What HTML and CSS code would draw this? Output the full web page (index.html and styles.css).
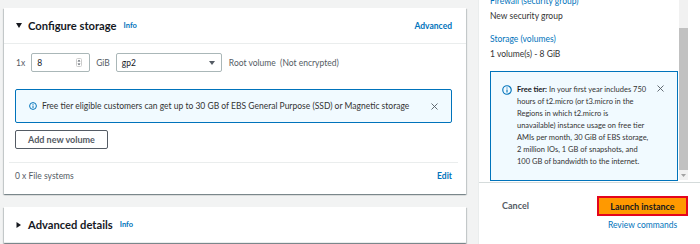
FILE: index.html
```html
<!DOCTYPE html>
<html lang="en">
<head>
    <meta charset="UTF-8">
    <meta name="viewport" content="width=device-width, initial-scale=1.0">
    <title>Launch an instance</title>
    <link rel="stylesheet" href="styles.css">
</head>
<body>
    <div class="layout">
        <main class="main">
            <section class="card">
                <div class="card-header">
                    <svg class="caret" width="6" height="5" viewBox="0 0 6 5"><path d="M0 0h6L3 5z" fill="#16191f"/></svg>
                    <h2>Configure storage</h2>
                    <a class="info">Info</a>
                    <a class="header-link">Advanced</a>
                </div>
                <div class="card-body">
                    <div class="volume-row">
                        <span class="muted">1x</span>
                        <div class="field field-number">
                            <span>8</span>
                            <svg width="6" height="9" viewBox="0 0 6 9"><rect x="0.5" y="0.5" width="5" height="8" rx="1" fill="none" stroke="#ccc"/><path d="M1.5 3.5h3L3 1.8zM1.5 5.5h3L3 7.2z" fill="#545b64"/></svg>
                        </div>
                        <span class="muted">GiB</span>
                        <div class="field field-select">
                            <span>gp2</span>
                            <svg width="6" height="4" viewBox="0 0 6 4"><path d="M0 0h6L3 4z" fill="#545b64"/></svg>
                        </div>
                        <span class="muted">Root volume&nbsp; (Not encrypted)</span>
                    </div>

                    <div class="alert">
                        <svg class="alert-icon" width="8" height="8" viewBox="0 0 16 16"><circle cx="8" cy="8" r="6.8" fill="none" stroke="#0073bb" stroke-width="2"/><path d="M8 7v5M8 3.8v1.8" stroke="#0073bb" stroke-width="2"/></svg>
                        <p>Free tier eligible customers can get up to 30 GB of EBS General Purpose (SSD) or Magnetic storage</p>
                        <svg class="close" width="7" height="7" viewBox="0 0 14 14"><path d="M1 1l12 12M13 1L1 13" stroke="#545b64" stroke-width="1.8"/></svg>
                    </div>

                    <button class="btn">Add new volume</button>

                    <div class="divider"></div>

                    <div class="fs-row">
                        <span class="muted">0 x File systems</span>
                        <a class="link-bold">Edit</a>
                    </div>
                </div>
            </section>

            <section class="card">
                <div class="card-header">
                    <svg class="caret" width="6" height="6" viewBox="0 0 6 6"><path d="M0.5 0v6L5 3z" fill="#16191f"/></svg>
                    <h2>Advanced details</h2>
                    <a class="info">Info</a>
                </div>
            </section>
        </main>

        <aside class="summary">
            <div class="summary-scroll">
                <div class="summary-content">
                    <div class="summary-item">
                        <a class="summary-label">Firewall (security group)</a>
                        <div class="summary-value">New security group</div>
                    </div>
                    <div class="summary-item">
                        <a class="summary-label">Storage (volumes)</a>
                        <div class="summary-value">1 volume(s) - 8 GiB</div>
                    </div>

                    <div class="tip">
                        <svg class="tip-icon" width="10" height="10" viewBox="0 0 16 16"><circle cx="8" cy="8" r="6.8" fill="none" stroke="#0073bb" stroke-width="1.8"/><path d="M8 7v5M8 3.8v1.8" stroke="#0073bb" stroke-width="1.8"/></svg>
                        <p><b>Free tier:</b> In your first year includes 750<br>
                        hours of t2.micro (or t3.micro in the<br>
                        Regions in which t2.micro is<br>
                        unavailable) instance usage on free tier<br>
                        AMIs per month, 30 GiB of EBS storage,<br>
                        2 million IOs, 1 GB of snapshots, and<br>
                        100 GB of bandwidth to the internet.</p>
                        <svg class="close" width="7" height="7" viewBox="0 0 14 14"><path d="M1 1l12 12M13 1L1 13" stroke="#545b64" stroke-width="1.8"/></svg>
                    </div>
                </div>
                <div class="scrollbar">
                    <div class="thumb"></div>
                    <svg class="scroll-arrow" width="5" height="3" viewBox="0 0 5 3"><path d="M0 0h5L2.5 3z" fill="#a3a3a3"/></svg>
                </div>
            </div>

            <div class="summary-footer">
                <a class="cancel">Cancel</a>
                <div class="launch">
                    <button class="btn-primary">Launch instance</button>
                    <a class="review">Review commands</a>
                </div>
            </div>
        </aside>
    </div>
</body>
</html>
```

FILE: styles.css
```css
:root {
    --text-color: #16191f;
    --muted-color: #545b64;
    --link-color: #0073bb;
    --line-color: #eaeded;
}

body {
    margin: 0;
    font-family: Lato, 'Liberation Sans', sans-serif;
    font-size: 8.5px;
    color: var(--text-color);
    overflow: hidden;
}

a {
    color: var(--link-color);
    text-decoration: none;
    cursor: pointer;
}

p {
    margin: 0;
}

.layout {
    display: flex;
    gap: 12px;
    height: 244px;
    background: #f2f3f3;
}

.main {
    width: 462px;
    padding: 8px 0 0 4px;
}

.card {
    background: #fff;
    margin-bottom: 13px;
    box-shadow: 0 1px 1px 0 rgba(0,28,36,0.3), 1px 1px 1px 0 rgba(0,28,36,0.15), -1px 1px 1px 0 rgba(0,28,36,0.15);
}

.card-header {
    display: flex;
    align-items: center;
    height: 35px;
    padding: 0 14px 0 12px;
    border-bottom: 1px solid var(--line-color);
}

.caret {
    margin-right: 6px;
}

.card-header h2 {
    margin: 0;
    font-size: 11.2px;
    font-weight: 700;
}

.info {
    margin-left: 7px;
    font-size: 7.5px;
    font-weight: 700;
}

.header-link {
    margin-left: auto;
    font-weight: 700;
}

.card-body {
    padding: 9px 14px 12px 11px;
}

.muted {
    color: var(--muted-color);
}

.volume-row {
    display: flex;
    align-items: center;
    height: 19px;
    gap: 6px;
    padding-left: 1px;
}

.field {
    display: flex;
    align-items: center;
    justify-content: space-between;
    box-sizing: border-box;
    height: 19px;
    padding: 0 6px 0 5px;
    border: 1px solid #aab7b8;
    border-radius: 2px;
}

.field-number {
    width: 59px;
    padding-right: 7px;
}

.field-select {
    width: 106px;
}

.volume-row .muted:last-child {
    margin-left: 1px;
}

.alert {
    display: flex;
    align-items: center;
    box-sizing: border-box;
    height: 34px;
    margin-top: 17px;
    padding: 0 13px;
    background: #f1faff;
    border: 1px solid var(--link-color);
    border-radius: 2px;
    color: #333;
}

.alert-icon {
    margin-right: 5px;
}

.alert p {
    flex: 1;
}

.btn {
    display: block;
    box-sizing: border-box;
    height: 19px;
    margin-top: 7px;
    padding: 0 12px;
    font-family: inherit;
    font-size: 9px;
    font-weight: 700;
    color: var(--muted-color);
    background: #fff;
    border: 1px solid var(--muted-color);
    border-radius: 2px;
}

.divider {
    height: 1px;
    margin: 13px -6px 0;
    background: var(--line-color);
}

.fs-row {
    display: flex;
    justify-content: space-between;
    margin-top: 7px;
    line-height: 12px;
}

.link-bold {
    font-weight: 700;
}

/* summary panel on the right */
.summary {
    display: flex;
    flex-direction: column;
    width: 221px;
    background: #fff;
    border-left: 1px solid var(--line-color);
}

.summary-scroll {
    display: flex;
    height: 182px;
    overflow: hidden;
    border-bottom: 1px solid #d5dbdb;
}

.summary-content {
    width: 188px;
    margin: -5px 0 0 11px;
}

.summary-item {
    margin-bottom: 11px;
    line-height: 12px;
}

.summary-label {
    display: block;
}

.summary-value {
    margin-top: 3px;
    color: #333;
}

.summary-item:last-of-type {
    margin-bottom: 10px;
}

.tip {
    display: flex;
    align-items: flex-start;
    box-sizing: border-box;
    padding: 12px 13px 12px 11px;
    background: #f1faff;
    border: 1px solid var(--link-color);
    color: #333;
    font-size: 7.5px;
    line-height: 12px;
}

.tip-icon {
    flex: none;
    margin: 1px 5px 0 0;
}

.tip p {
    flex: 1;
    white-space: nowrap;
}

.tip b {
    color: var(--text-color);
}

.tip .close {
    flex: none;
    margin-top: 1px;
}

.scrollbar {
    display: flex;
    flex-direction: column;
    align-items: center;
    width: 9px;
    height: 180px;
    margin: 0 12px 0 1px;
    background: #f1f1f1;
}

.thumb {
    width: 9px;
    height: 142px;
    margin-top: 28px;
    background: #c1c1c1;
}

.scroll-arrow {
    margin-top: 4px;
}

.summary-footer {
    display: flex;
    justify-content: flex-end;
    align-items: flex-start;
    padding: 13px 12px 0 0;
}

.cancel {
    margin-right: 68px;
    line-height: 20px;
    font-size: 9px;
    font-weight: 700;
    color: var(--muted-color);
}

.launch {
    display: flex;
    flex-direction: column;
    align-items: center;
}

.btn-primary {
    width: 91px;
    height: 20px;
    padding: 0;
    font-family: inherit;
    font-size: 9px;
    font-weight: 700;
    color: var(--text-color);
    background: #ff9900;
    border: 2px solid #e4051d;
    border-radius: 0;
}

.review {
    margin-top: 3px;
    line-height: 12px;
}
```
